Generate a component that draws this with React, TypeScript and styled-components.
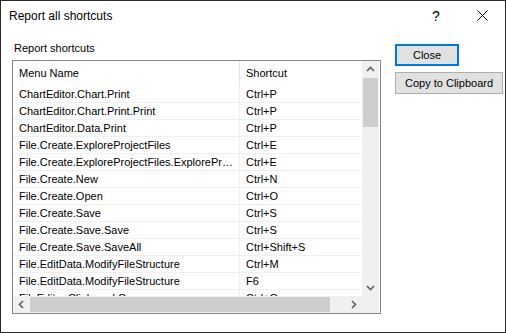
import * as React from "react"
import styled, { createGlobalStyle } from "styled-components"

interface Shortcut {
  name: string
  keys: string
}

const shortcuts: Shortcut[] = [
  { name: "ChartEditor.Chart.Print", keys: "Ctrl+P" },
  { name: "ChartEditor.Chart.Print.Print", keys: "Ctrl+P" },
  { name: "ChartEditor.Data.Print", keys: "Ctrl+P" },
  { name: "File.Create.ExploreProjectFiles", keys: "Ctrl+E" },
  { name: "File.Create.ExploreProjectFiles.ExploreProjectFiles", keys: "Ctrl+E" },
  { name: "File.Create.New", keys: "Ctrl+N" },
  { name: "File.Create.Open", keys: "Ctrl+O" },
  { name: "File.Create.Save", keys: "Ctrl+S" },
  { name: "File.Create.Save.Save", keys: "Ctrl+S" },
  { name: "File.Create.Save.SaveAll", keys: "Ctrl+Shift+S" },
  { name: "File.EditData.ModifyFileStructure", keys: "Ctrl+M" },
  { name: "File.EditData.ModifyFileStructure", keys: "F6" },
  { name: "FileEditor.Clipboard.Copy", keys: "Ctrl+C" },
  { name: "FileEditor.Clipboard.Cut", keys: "Ctrl+X" },
]

const COL1 = 227
const COL2 = 140

type Dir = "up" | "down" | "left" | "right"

const chevrons: Record<Dir, string> = {
  up: "1,6 4.5,2.5 8,6",
  down: "1,3 4.5,6.5 8,3",
  left: "6,1 2.5,4.5 6,8",
  right: "3,1 6.5,4.5 3,8",
}

const Chevron = ({ dir }: { dir: Dir }) => (
  <svg width="9" height="9" viewBox="0 0 9 9">
    <polyline points={chevrons[dir]} fill="none" stroke="#606060" strokeWidth="1.6" />
  </svg>
)

const makeRows = (ss: Shortcut[]): JSX.Element[] =>
  ss.map((s, i) => (
    <Row key={i}>
      <Cell w={COL1} divider>
        {s.name}
      </Cell>
      <Cell w={COL2}>{s.keys}</Cell>
    </Row>
  ))

export default () => (
  <>
    <GlobalStyle />
    <Window>
      <TitleBar>
        <Title>Report all shortcuts</Title>
        <CaptionButton>
          <HelpMark>?</HelpMark>
        </CaptionButton>
        <CaptionButton>
          <svg width="11" height="11" viewBox="0 0 11 11">
            <path d="M0.5 0.5 L10.5 10.5 M10.5 0.5 L0.5 10.5" stroke="#000" strokeWidth="1" />
          </svg>
        </CaptionButton>
      </TitleBar>
      <Body>
        <LeftPane>
          <GroupLabel>Report shortcuts</GroupLabel>
          <ListBox>
            <ListView>
              <Header>
                <HeaderCell w={COL1}>Menu Name</HeaderCell>
                <HeaderCell w={COL2}>Shortcut</HeaderCell>
              </Header>
              {makeRows(shortcuts)}
            </ListView>
            <VScroll>
              <ArrowBox>
                <Chevron dir="up" />
              </ArrowBox>
              <VThumb />
              <Track />
              <ArrowBox>
                <Chevron dir="down" />
              </ArrowBox>
            </VScroll>
            <HScroll>
              <ArrowBox>
                <Chevron dir="left" />
              </ArrowBox>
              <HThumb />
              <Track />
              <ArrowBox>
                <Chevron dir="right" />
              </ArrowBox>
            </HScroll>
            <Corner />
          </ListBox>
        </LeftPane>
        <ButtonColumn>
          <Button isDefault>Close</Button>
          <Button>Copy to Clipboard</Button>
        </ButtonColumn>
      </Body>
    </Window>
  </>
)

const GlobalStyle = createGlobalStyle`
  html, body {
    margin: 0;
    padding: 0;
    background: #fff;
  }
`

const Window = styled.div`
  width: 506px;
  height: 333px;
  box-sizing: border-box;
  border: 1px solid #2b2b2b;
  background: #fff;
  display: flex;
  flex-direction: column;
  font-family: "Liberation Sans", Arial, sans-serif;
  font-size: 11px;
  color: #000;
`

const TitleBar = styled.div`
  height: 29px;
  display: flex;
  align-items: center;
  padding-left: 8px;
  font-size: 12px;
`

const Title = styled.div`
  flex: 1;
`

const CaptionButton = styled.div`
  width: 46px;
  height: 29px;
  display: flex;
  align-items: center;
  justify-content: center;
`

const HelpMark = styled.span`
  font-size: 14px;
`

const Body = styled.div`
  display: flex;
  padding: 12px 0 0 11px;
`

const LeftPane = styled.div`
  display: flex;
  flex-direction: column;
`

const GroupLabel = styled.div`
  line-height: 13px;
  margin: 0 0 5px 2px;
`

const ListBox = styled.div`
  width: 369px;
  height: 254px;
  box-sizing: border-box;
  border: 1px solid #828790;
  display: grid;
  grid-template-columns: 349px 17px;
  grid-template-rows: 235px 17px;
`

const ListView = styled.div`
  overflow: hidden;
  background: #fff;
`

const Header = styled.div`
  display: flex;
  height: 25px;
  width: ${COL1 + COL2}px;
`

const HeaderCell = styled.div<{ w: number }>`
  width: ${(p) => p.w}px;
  flex: none;
  box-sizing: border-box;
  padding: 0 0 2px 6px;
  border-right: 1px solid #e5e5e5;
  display: flex;
  align-items: center;
  white-space: nowrap;
`

const Row = styled.div`
  display: flex;
  height: 17px;
  width: ${COL1 + COL2}px;
  box-sizing: border-box;
  border-bottom: 1px solid #f0f0f0;
`

const Cell = styled.div<{ w: number; divider?: boolean }>`
  width: ${(p) => p.w}px;
  flex: none;
  box-sizing: border-box;
  padding: 0 4px 0 6px;
  line-height: 16px;
  white-space: nowrap;
  overflow: hidden;
  text-overflow: ellipsis;
  border-right: 1px solid ${(p) => (p.divider ? "#f0f0f0" : "transparent")};
`

const VScroll = styled.div`
  display: flex;
  flex-direction: column;
  background: #f0f0f0;
`

const HScroll = styled.div`
  display: flex;
  background: #f0f0f0;
`

const ArrowBox = styled.div`
  width: 17px;
  height: 17px;
  flex: none;
  display: flex;
  align-items: center;
  justify-content: center;
`

const Track = styled.div`
  flex: 1;
`

const VThumb = styled.div`
  height: 49px;
  margin: 0 1px;
  background: #cdcdcd;
`

const HThumb = styled.div`
  width: 300px;
  margin: 1px 0;
  background: #cdcdcd;
`

const Corner = styled.div`
  background: #f0f0f0;
`

const ButtonColumn = styled.div`
  display: flex;
  flex-direction: column;
  align-items: flex-start;
  gap: 6px;
  margin: 2px 0 0 14px;
`

const Button = styled.div<{ isDefault?: boolean }>`
  height: 22px;
  min-width: 64px;
  box-sizing: border-box;
  padding: 0 9px;
  display: flex;
  align-items: center;
  justify-content: center;
  background: #e1e1e1;
  border: ${(p) => (p.isDefault ? "2px solid #0078d7" : "1px solid #adadad")};
  white-space: nowrap;
`
